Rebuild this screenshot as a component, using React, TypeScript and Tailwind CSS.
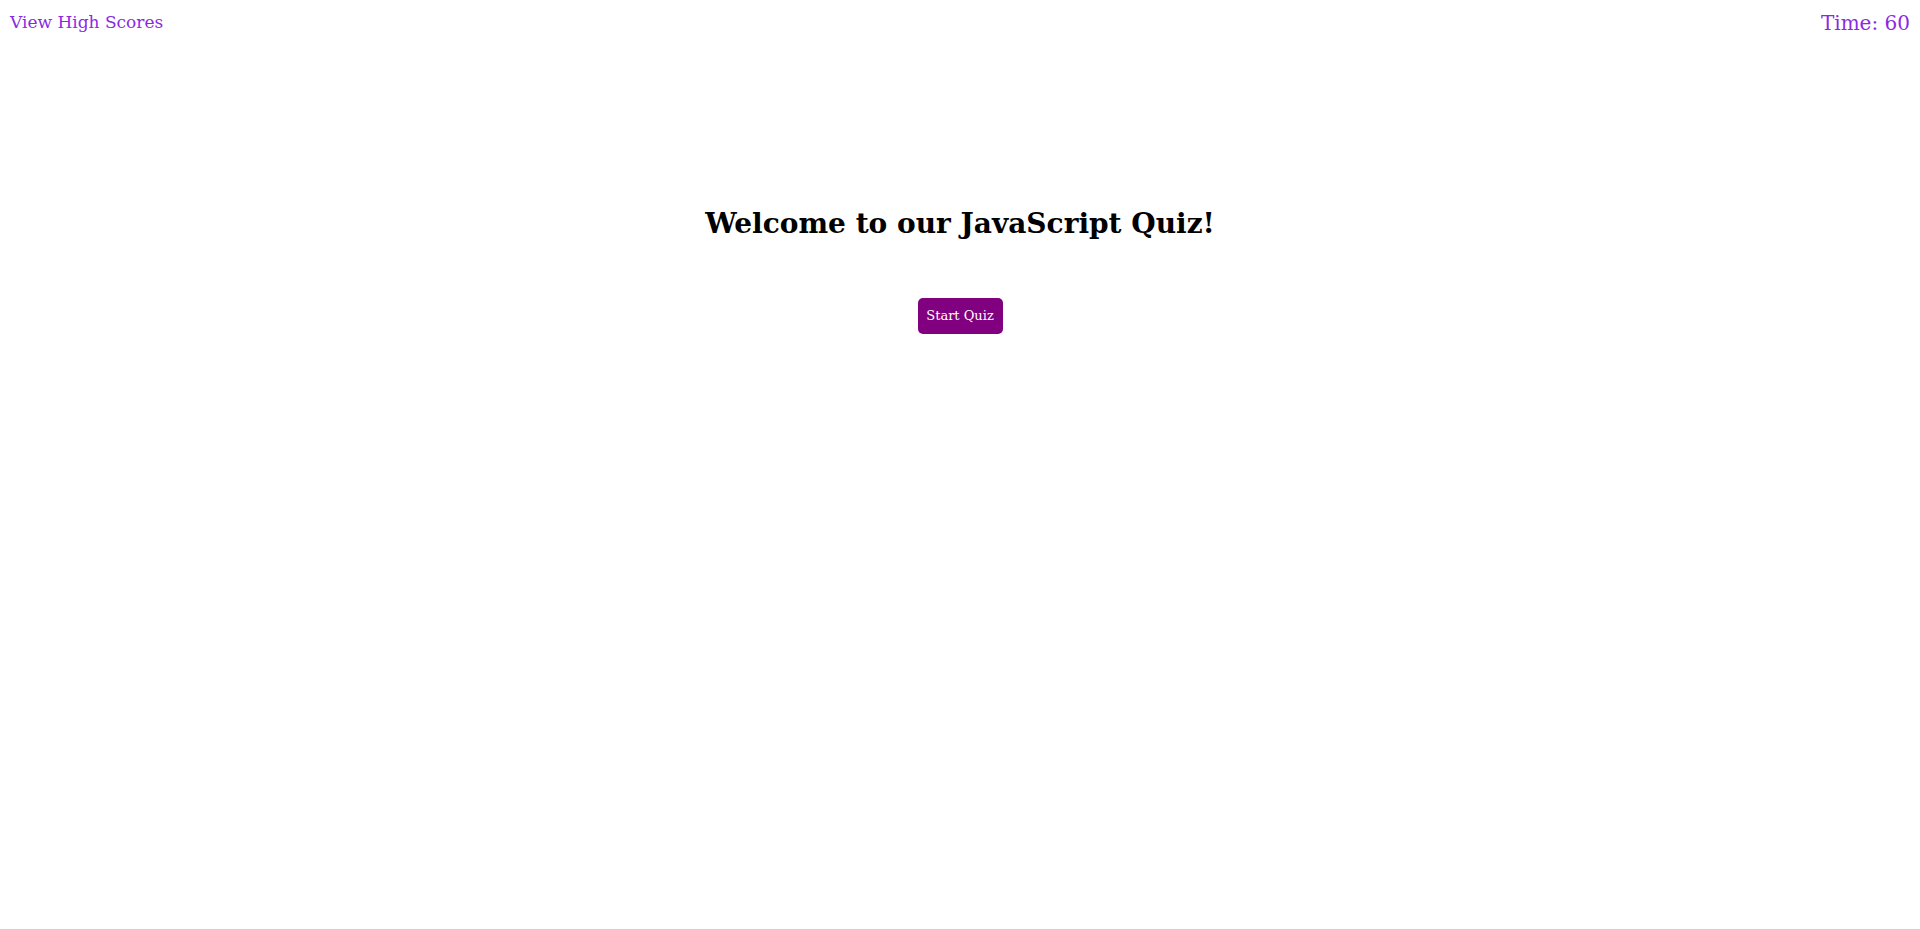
import React from "react";

export default function App() {
  return (
    <div className="min-h-screen bg-white font-['Georgia','DejaVu_Serif',serif]">
      <header className="flex items-start justify-between px-[10px] pt-[10px]">
        <a href="#" className="text-[17px] leading-[24px] text-[#8a2be2]">
          View High Scores
        </a>
        <span className="text-[20px] leading-[26px] text-[#8a2be2]">Time: 60</span>
      </header>

      <main className="flex flex-col items-center pt-[170px]">
        <h1 className="text-[28px] font-bold leading-[36px] text-black">
          Welcome to our JavaScript Quiz!
        </h1>
        <button className="mt-[56px] h-[36px] w-[85px] rounded-[5px] bg-[#800080] text-[13px] text-white">
          Start Quiz
        </button>
      </main>
    </div>
  );
}
